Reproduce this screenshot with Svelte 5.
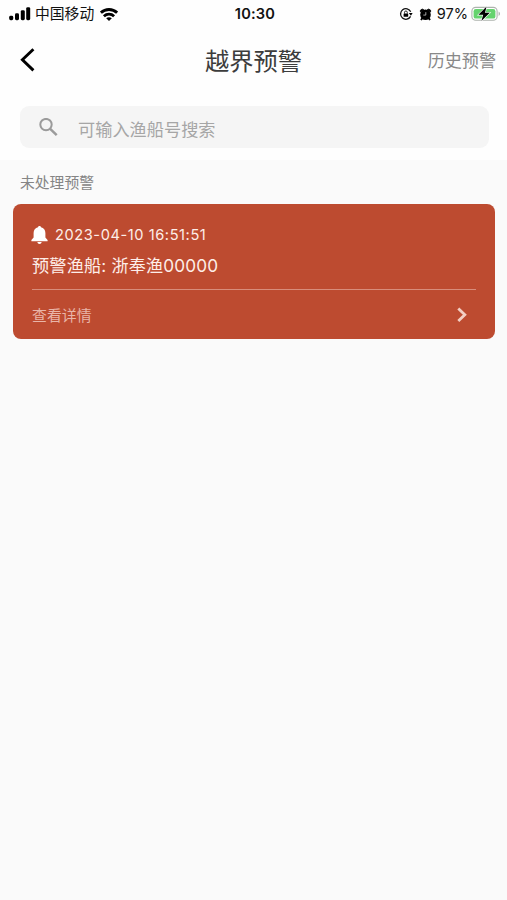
<script lang="ts">
    const carrier = "中国移动";
    const time = "10:30";
    const battery = 97;

    let keyword = $state("");

    const warnings = [
        { id: 1, time: "2023-04-10 16:51:51", ship: "浙奉渔00000" },
    ];

    const shown = $derived(warnings.filter((w) => w.ship.includes(keyword)));
</script>

<div class="page">
    <header class="top">
        <div class="status-bar">
            <div class="sb-left">
                <svg class="signal" viewBox="0 0 22 14" width="22" height="14">
                    <rect x="0.2" y="8.8" width="4" height="4.4" rx="1.4" />
                    <rect x="6" y="6.2" width="4" height="7" rx="1.4" />
                    <rect x="11.8" y="3.2" width="4" height="10" rx="1.4" />
                    <rect x="17.2" y="0.2" width="4" height="13" rx="1.4" />
                </svg>
                <span class="carrier">{carrier}</span>
                <svg class="wifi" viewBox="0 0 18 13" width="18" height="13">
                    <g fill="none" stroke="#000" stroke-width="2.8">
                        <path d="M0.9 4.7 C5.4 0.4 12.6 0.4 17.1 4.7" />
                        <path d="M3.9 8.2 C6.8 5.4 11.2 5.4 14.1 8.2" />
                    </g>
                    <path d="M9 13 L6.2 10.3 C7.8 8.9 10.2 8.9 11.8 10.3 Z" />
                </svg>
            </div>
            <span class="clock">{time}</span>
            <div class="sb-right">
                <svg class="lock" viewBox="0 0 14 14" width="14" height="14">
                    <path d="M11.6 9.4 A5.3 5.3 0 1 1 11.7 4.8" fill="none" stroke="#111" stroke-width="1.3" />
                    <path d="M9.8 6 L13.6 6 L11.9 8.8 Z" />
                    <rect x="4.6" y="6.4" width="4.6" height="3.4" rx="0.6" />
                    <path d="M5.5 6.6 V5.4 A1.4 1.4 0 0 1 8.3 5.4 V6.6" fill="none" stroke="#111" stroke-width="0.9" />
                </svg>
                <svg class="alarm" viewBox="0 0 13 13" width="13" height="13">
                    <path d="M1.4 4 V2.2 L3.2 1 L5 2 Z M11.6 4 V2.2 L9.8 1 L8 2 Z" stroke="#000" stroke-width="0.8" />
                    <circle cx="6.5" cy="6.8" r="5.3" />
                    <path d="M3.4 10 L2 12 M9.6 10 L11 12" stroke="#000" stroke-width="2" />
                    <path d="M6.8 4.2 V7.1 H4.3" fill="none" stroke="#ccc" stroke-width="0.8" />
                </svg>
                <span class="percent">{battery}%</span>
                <svg class="battery" viewBox="0 0 30 16" width="30" height="16">
                    <rect x="0.9" y="1.4" width="25.2" height="12.8" rx="3.8" fill="#fff" stroke="#adb3ad" stroke-width="1.1" />
                    <rect x="2.6" y="3" width="21.8" height="9.6" rx="2.2" fill="#65d36e" />
                    <path d="M27.6 5.6 C29.5 6.4 29.5 9.2 27.6 10 Z" fill="#adb3ad" />
                    <path d="M15.6 0.6 L7.4 8.8 H12.2 L10.4 15 L18.8 6.8 H14 Z" stroke="#fff" stroke-width="1.2" paint-order="stroke" />
                </svg>
            </div>
        </div>

        <nav class="nav-bar">
            <button class="back" aria-label="返回">
                <svg viewBox="0 0 16 24" width="16" height="24">
                    <path d="M13.4 1.2 L2.4 11.7 L13.4 22.4" fill="none" stroke="#000" stroke-width="2.9" />
                </svg>
            </button>
            <h1 class="title">越界预警</h1>
            <button class="history">历史预警</button>
        </nav>

        <label class="search">
            <svg viewBox="0 0 19 19" width="19" height="19">
                <g fill="none" stroke="#9b9b9b" stroke-width="2">
                    <circle cx="7" cy="6.6" r="5.7" />
                    <path d="M11.2 10.8 L17.7 17.1" stroke-width="2.5" />
                </g>
            </svg>
            <input bind:value={keyword} placeholder="可输入渔船号搜索" />
        </label>
    </header>

    <main class="list">
        <h2 class="section-title">未处理预警</h2>
        {#each shown as w (w.id)}
            <article class="card">
                <div class="card-time">
                    <svg viewBox="0 0 17 18" width="17" height="18">
                        <path d="M8.5 0 C9.4 0 10 0.7 10 1.3 C12.8 2 14.4 4.2 14.4 7 V11.5 L16.6 14 V15.2 H0.4 V14 L2.6 11.5 V7 C2.6 4.2 4.2 2 7 1.3 C7 0.7 7.6 0 8.5 0 Z" />
                        <path d="M6.4 16 H10.6 C10.6 18.5 6.4 18.5 6.4 16 Z" />
                    </svg>
                    <span>{w.time}</span>
                </div>
                <div class="card-ship">预警渔船: {w.ship}</div>
                <button class="card-more">
                    <span>查看详情</span>
                    <svg viewBox="0 0 10 16" width="10" height="16">
                        <path d="M1.3 1.6 L7.8 7.8 L1.3 14" fill="none" stroke="#f3cfc4" stroke-width="2.8" />
                    </svg>
                </button>
            </article>
        {/each}
    </main>
</div>

<style>
    :global(body) {
        margin: 0;
        background: #fafafa;
    }
    .page {
        display: flex;
        flex-direction: column;
        min-height: 100vh;
        background: #fafafa;
        font-family: Inter, "Noto Sans CJK SC", sans-serif;
    }
    button {
        padding: 0;
        border: 0;
        background: none;
        font: inherit;
        cursor: pointer;
    }
    svg {
        display: block;
        flex-shrink: 0;
    }
    .top {
        box-sizing: border-box;
        height: 160px;
        background: #fefefe;
    }

    .status-bar {
        display: grid;
        grid-template-columns: 1fr auto 1fr;
        align-items: center;
        height: 28px;
        padding: 0 6px 0 9px;
        color: #111;
        font-size: 14.8px;
        line-height: 28px;
    }
    .sb-left,
    .sb-right {
        display: flex;
        align-items: center;
    }
    .sb-right {
        justify-content: flex-end;
    }
    .carrier {
        margin: 0 6px 0 4px;
    }
    .clock {
        font-size: 14.6px;
        font-weight: 600;
        letter-spacing: 0.2px;
    }
    .alarm {
        margin: 0 5px 0 6px;
    }
    .percent {
        font-size: 14.6px;
        margin-right: 3px;
    }

    .nav-bar {
        display: grid;
        grid-template-columns: 1fr auto 1fr;
        align-items: center;
        height: 64px;
        padding: 0 11px;
    }
    .back {
        justify-self: start;
        margin-left: 9px;
    }
    .title {
        margin: 0;
        padding-top: 2px;
        color: #3c3c3c;
        font-size: 24.3px;
        font-weight: 400;
        line-height: 36px;
    }
    .history {
        justify-self: end;
        padding-top: 2px;
        color: #888;
        font-size: 17.1px;
        line-height: 26px;
    }

    .search {
        display: flex;
        align-items: center;
        gap: 20px;
        box-sizing: border-box;
        height: 42px;
        margin: 14px 18px 0 20px;
        padding: 0 19px;
        border-radius: 9px;
        background: #f5f5f5;
    }
    .search input {
        flex: 1;
        min-width: 0;
        padding: 4px 0 0;
        border: 0;
        outline: 0;
        background: none;
        color: #444;
        font: inherit;
        font-size: 17.2px;
    }
    .search input::placeholder {
        color: #a6a6a6;
        opacity: 1;
    }

    .list {
        padding: 12px 12px 0 13px;
    }
    .section-title {
        margin: 0 0 10px 7px;
        color: #858585;
        font-size: 14.8px;
        font-weight: 400;
        line-height: 22px;
    }
    .card {
        box-sizing: border-box;
        height: 135px;
        padding: 20px 19px 0;
        border-radius: 8px;
        background: #bd4b30;
        color: #fdeee9;
    }
    .card-time {
        display: flex;
        align-items: center;
        gap: 7px;
        height: 22px;
        margin-left: -1px;
        font-size: 14.6px;
        letter-spacing: 0.58px;
    }
    .card-time svg {
        fill: #fff;
    }
    .card-ship {
        height: 43px;
        font-size: 17.2px;
        line-height: 40px;
        letter-spacing: 0.14px;
    }
    .card-more {
        display: flex;
        align-items: center;
        justify-content: space-between;
        width: 100%;
        height: 50px;
        padding-right: 9px;
        border-top: 1px solid #d88d7b;
        color: #e9b5a8;
        font-size: 14.9px;
    }
</style>
